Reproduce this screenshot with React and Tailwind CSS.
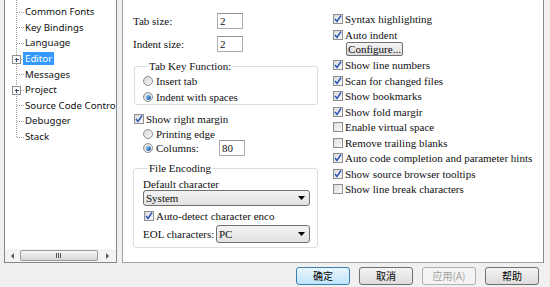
import React from "react";

const serif = "font-['Liberation_Serif',serif] text-[11px] leading-[14px] text-[#111]";

const treeItems = [
  { label: "Common Fonts" },
  { label: "Key Bindings" },
  { label: "Language" },
  { label: "Editor", expand: true, selected: true },
  { label: "Messages" },
  { label: "Project", expand: true },
  { label: "Source Code Contro" },
  { label: "Debugger" },
  { label: "Stack" },
];

const ROW = 15.6;

function TreeLines() {
  const centers = treeItems.map((_, i) => Math.round(4 + ROW / 2 + i * ROW) + 0.5);
  const last = centers[centers.length - 1];
  return (
    <svg width="20" height="150" className="shrink-0" shapeRendering="crispEdges">
      <line x1="11.5" y1="0" x2="11.5" y2={last} stroke="#a0a0a0" strokeDasharray="1 1" />
      {treeItems.map((it, i) => (
        <g key={i}>
          <line x1={it.expand ? 16 : 12} y1={centers[i]} x2="20" y2={centers[i]} stroke="#a0a0a0" strokeDasharray="1 1" />
          {it.expand && (
            <>
              <rect x="7.5" y={centers[i] - 4} width="8" height="8" fill="#f7f7f7" stroke="#919191" />
              <line x1="9.5" y1={centers[i]} x2="14" y2={centers[i]} stroke="#3a4a6a" />
              <line x1="11.5" y1={centers[i] - 2} x2="11.5" y2={centers[i] + 2.5} stroke="#3a4a6a" />
            </>
          )}
        </g>
      ))}
    </svg>
  );
}

function Tree() {
  return (
    <div className="w-[113px] h-full bg-white border border-t-0 border-[#828790] flex flex-col overflow-hidden">
      <div className="flex-1 flex overflow-hidden">
        <TreeLines />
        <div className="pt-[4px] flex flex-col font-['Noto_Sans',sans-serif] text-[9.7px] text-[#111]">
          {treeItems.map((it) => (
            <div key={it.label} className="h-[15.6px] flex items-center whitespace-nowrap">
              <span
                className={
                  it.selected
                    ? "ml-[-2px] px-[2px] h-[13px] leading-[13px] bg-[#3399ff] text-white"
                    : "leading-[13px]"
                }
              >
                {it.label}
              </span>
            </div>
          ))}
        </div>
      </div>
      <div className="h-[13px] bg-[#f3f3f3] flex items-center">
        <div className="w-[15px] flex justify-center">
          <svg width="4" height="6"><path d="M3 0 L0 3 L3 6 Z" fill="#5a5a5a" /></svg>
        </div>
        <div className="w-[78px] h-[11px] rounded-[2px] border border-[#9b9b9b] bg-linear-to-b from-[#f5f5f5] to-[#d6d6d6] flex items-center justify-center">
          <svg width="6" height="5" shapeRendering="crispEdges">
            <line x1="0.5" y1="0" x2="0.5" y2="5" stroke="#555" />
            <line x1="2.5" y1="0" x2="2.5" y2="5" stroke="#555" />
            <line x1="4.5" y1="0" x2="4.5" y2="5" stroke="#555" />
          </svg>
        </div>
        <div className="flex-1 flex justify-center">
          <svg width="4" height="6"><path d="M1 0 L4 3 L1 6 Z" fill="#5a5a5a" /></svg>
        </div>
      </div>
    </div>
  );
}

function Check({ on }) {
  return (
    <div className="w-[10px] h-[10px] shrink-0 border border-[#8f8f8f] bg-linear-to-br from-[#dadada] to-[#fbfbfb] flex items-center justify-center">
      {on && (
        <svg width="8" height="8" viewBox="0 0 8 8">
          <path d="M1 4 L3 6.5 L7 0.5" fill="none" stroke="#2d58b8" strokeWidth="1.5" />
        </svg>
      )}
    </div>
  );
}

function Radio({ on }) {
  return (
    <div className="w-[10px] h-[10px] shrink-0 rounded-full border border-[#8f8f8f] bg-linear-to-br from-[#d6d6d6] to-[#fafafa] flex items-center justify-center">
      {on && <div className="w-[5px] h-[5px] rounded-full bg-linear-to-br from-[#8ad0fa] to-[#1b4f9f]" />}
    </div>
  );
}

function CheckRow({ on, label, className = "" }) {
  return (
    <div className={"flex items-center gap-[2px] whitespace-nowrap " + className}>
      <Check on={on} />
      <span>{label}</span>
    </div>
  );
}

function RadioRow({ on, label, className = "" }) {
  return (
    <div className={"flex items-center gap-[3px] whitespace-nowrap " + className}>
      <Radio on={on} />
      <span>{label}</span>
    </div>
  );
}

function NumInput({ value }) {
  return (
    <div className="w-[26px] h-[16px] border border-[#abadb3] border-t-[#8d9096] bg-white pl-[2px] leading-[14px]">
      {value}
    </div>
  );
}

function Select({ value, className = "" }) {
  return (
    <div
      className={
        "flex items-center justify-between rounded-[3px] border border-[#707070] bg-linear-to-b from-[#f3f3f3] to-[#e2e2e2] pl-[2px] pr-[4px] " +
        className
      }
    >
      <span>{value}</span>
      <svg width="7" height="4"><path d="M0 0 H7 L3.5 4 Z" fill="#000" /></svg>
    </div>
  );
}

function Group({ title, className = "", children }) {
  return (
    <fieldset className={"border border-[#d5dfe5] rounded-[3px] " + className}>
      <legend className="ml-[5px] px-[1px] leading-[12px]">{title}</legend>
      {children}
    </fieldset>
  );
}

function LeftColumn() {
  return (
    <div className="w-[200px] flex flex-col">
      <div className="mt-[13px] h-[16px] flex items-center">
        <span className="w-[84px]">Tab size:</span>
        <NumInput value="2" />
      </div>
      <div className="mt-[7px] h-[16px] flex items-center">
        <span className="w-[84px]">Indent size:</span>
        <NumInput value="2" />
      </div>
      <Group title="Tab Key Function:" className="mt-[8px] ml-[1px] w-[184px] pl-[8px]">
        <RadioRow className="mt-[2px] h-[14px]" label="Insert tab" />
        <RadioRow className="mt-[2px] h-[14px]" on label="Indent with spaces" />
      </Group>
      <CheckRow className="mt-[7px] h-[14px] ml-[1px]" on label="Show right margin" />
      <RadioRow className="mt-[1px] h-[13px] pl-[10px]" label="Printing edge" />
      <div className="h-[16px] pl-[10px] flex items-center gap-[3px]">
        <Radio on />
        <span className="w-[60px]">Columns:</span>
        <NumInput value="80" />
      </div>
      <Group title="File Encoding" className="mt-[6px] w-[185px] pl-[9px] pb-[4px]">
        <div className="mt-[4px] h-[12px] leading-[12px]">Default character</div>
        <Select value="System" className="w-[167px] h-[16px]" />
        <CheckRow className="mt-[3px] h-[14px] ml-[1px]" on label="Auto-detect character enco" />
        <div className="mt-[2px] h-[18px] flex items-center">
          <span className="w-[73px] whitespace-nowrap">EOL characters:</span>
          <Select value="PC" className="w-[94px] h-[18px]" />
        </div>
      </Group>
    </div>
  );
}

const rightChecks = [
  { on: true, label: "Show line numbers" },
  { on: true, label: "Scan for changed files" },
  { on: true, label: "Show bookmarks" },
  { on: true, label: "Show fold margir" },
  { on: false, label: "Enable virtual space" },
  { on: false, label: "Remove trailing blanks" },
  { on: true, label: "Auto code completion and parameter hints" },
  { on: true, label: "Show source browser tooltips" },
  { on: false, label: "Show line break characters" },
];

function RightColumn() {
  return (
    <div className="flex flex-col pt-[11.5px]">
      <CheckRow className="h-[15.5px]" on label="Syntax highlighting" />
      <CheckRow className="h-[15.5px]" on label="Auto indent" />
      <button className="mt-[-1px] ml-[13px] w-[57px] h-[14px] rounded-[2px] border border-[#707070] bg-linear-to-b from-[#f4f4f4] to-[#dcdcdc] text-[11px] leading-[12px] text-center whitespace-nowrap">
        Configure...
      </button>
      <div className="mt-[2px] flex flex-col">
        {rightChecks.map((c) => (
          <CheckRow key={c.label} className="h-[15.5px]" on={c.on} label={c.label} />
        ))}
      </div>
    </div>
  );
}

function DlgButton({ children, primary, disabled }) {
  const base = "w-[54px] h-[18px] rounded-[3px] border flex items-center justify-center text-[10px] leading-[12px]";
  const look = primary
    ? "border-[#3c7fb1] bg-linear-to-b from-[#eaf6fd] to-[#bde4fa] text-black"
    : disabled
      ? "border-[#adb2b5] bg-[#f4f4f4] text-[#a0a0a0]"
      : "border-[#707070] bg-linear-to-b from-[#f4f4f4] to-[#dcdcdc] text-black";
  return <button className={base + " " + look}>{children}</button>;
}

export default function App() {
  return (
    <div className="w-[550px] h-[287px] bg-[#f0f0f0] flex flex-col overflow-hidden">
      <div className="h-[263px] flex pl-[4px] gap-[5px]">
        <Tree />
        <div className={"w-[422px] h-full bg-white border border-t-0 border-[#a0a0a0] border-r-[#8a8a8a] flex pl-[10px] " + serif}>
          <LeftColumn />
          <RightColumn />
        </div>
      </div>
      <div className="flex justify-end gap-[9px] pt-[4px] pr-[11px] font-['Noto_Sans_CJK_SC','Noto_Sans',sans-serif]">
        <DlgButton primary>确定</DlgButton>
        <DlgButton>取消</DlgButton>
        <DlgButton disabled>应用(A)</DlgButton>
        <DlgButton>帮助</DlgButton>
      </div>
    </div>
  );
}
